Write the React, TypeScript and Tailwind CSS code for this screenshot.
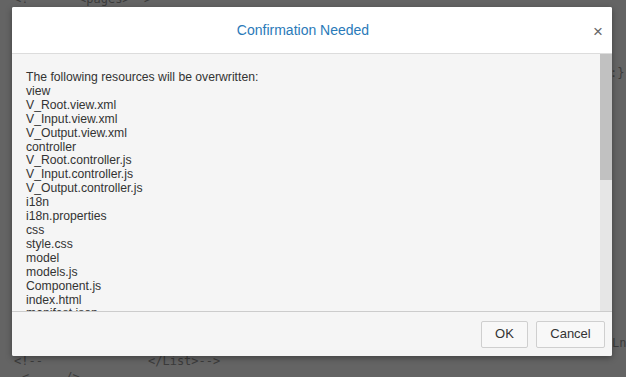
import React from "react";

const files = [
  "The following resources will be overwritten:",
  "view",
  "V_Root.view.xml",
  "V_Input.view.xml",
  "V_Output.view.xml",
  "controller",
  "V_Root.controller.js",
  "V_Input.controller.js",
  "V_Output.controller.js",
  "i18n",
  "i18n.properties",
  "css",
  "style.css",
  "model",
  "models.js",
  "Component.js",
  "index.html",
  "manifest.json",
];

export default function App() {
  return (
    <div className="relative w-[626px] h-[377px] overflow-hidden bg-[#646464]">
      <div
        className="absolute inset-0 text-[12px] leading-[14px] text-[#3b3b3b] whitespace-pre"
        style={{ fontFamily: '"DejaVu Sans Mono", "Liberation Mono", monospace' }}
      >
        <div className="absolute left-[14px] top-[-8px]">{"<!--     <pages>-->"}</div>
        <div className="absolute left-[610px] top-[66px]">{":}\""}</div>
        <div className="absolute left-[612px] top-[336px]">Lnr</div>
        <div className="absolute left-[14px] top-[354px]">{"<!--"}</div>
        <div className="absolute left-[148px] top-[354px]">{"</List>-->"}</div>
        <div className="absolute left-[22px] top-[370px]">{"< ... />"}</div>
      </div>
      <div
        className="absolute left-[12px] top-[7px] w-[600px] h-[349px] flex flex-col bg-white rounded-[2px] shadow-[0_2px_6px_rgba(0,0,0,0.35)] overflow-hidden"
        style={{ fontFamily: '"Liberation Sans", Arial, sans-serif' }}
      >
        <div className="relative h-[47px] shrink-0 flex items-center justify-center pr-[18px] border-b border-[#dcdcdc] bg-white">
          <span className="text-[14px] text-[#2a7ab9]">Confirmation Needed</span>
          <span className="absolute right-[9px] top-[15px] text-[17px] leading-[20px] text-[#666]">×</span>
        </div>
        <div className="flex-1 flex min-h-0 bg-[#f5f5f5]">
          <div className="flex-1 overflow-hidden pl-[14px] pt-[17px] text-[12.2px] leading-[13.9px] text-[#333]">
            {files.map((f) => (
              <div key={f}>{f}</div>
            ))}
          </div>
          <div className="w-[12px] shrink-0 flex flex-col bg-[#e6e6e6]">
            <div className="h-[126px] bg-[#c1c1c1]" />
          </div>
        </div>
        <div className="h-[45px] shrink-0 flex items-center justify-end gap-[8px] pr-[7px] border-t border-[#cccccc] bg-[#f5f5f5]">
          <button className="w-[47px] h-[27px] rounded-[2px] border border-[#cfcfcf] bg-[#f8f8f8] text-[13px] text-[#333]">
            OK
          </button>
          <button className="w-[69px] h-[27px] rounded-[2px] border border-[#cfcfcf] bg-[#f8f8f8] text-[13px] text-[#333]">
            Cancel
          </button>
        </div>
      </div>
    </div>
  );
}
